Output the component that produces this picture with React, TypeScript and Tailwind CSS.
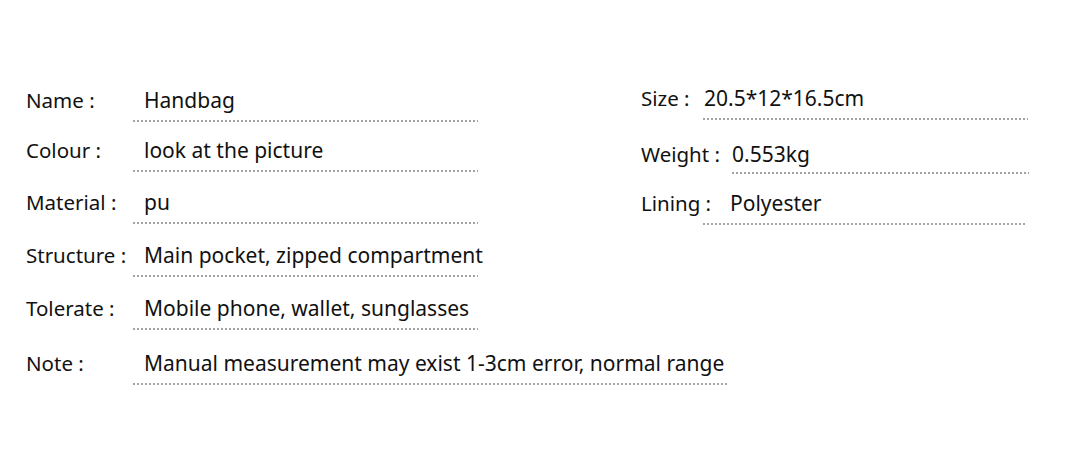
const dots = "h-[2px] bg-[linear-gradient(to_right,#a3a3a3_2px,transparent_2px)] bg-[length:4px_2px] bg-repeat-x";
const labelCls = "shrink-0 h-7 leading-7 text-[20.5px] text-[#111] whitespace-nowrap";
const valueCls = "h-7 leading-7 text-[21px] text-[#111] whitespace-nowrap";

function LeftRow({ label, value, mt, wide }: { label: string; value: string; mt: string; wide?: boolean }) {
    return (
        <div className={`flex ${mt}`}>
            <div className={`w-[107px] ${labelCls}`}>{label}</div>
            <div>
                <div className={`pl-[11px] ${valueCls}`}>{value}</div>
                <div className={`mt-[6px] ${dots} ${wide ? "w-[595px]" : "w-[345px]"}`}></div>
            </div>
        </div>
    );
}

export default function App() {
    return (
        <div className="w-[1080px] h-[466px] bg-white overflow-hidden font-['Noto_Sans',sans-serif]">
            <div className="flex">
                {/* Left column */}
                <div className="w-[615px] shrink-0 ml-[26px] pt-[86px]">
                    <LeftRow label="Name :" value="Handbag" mt="mt-0" />
                    <LeftRow label="Colour :" value="look at the picture" mt="mt-[14px]" />
                    <LeftRow label="Material :" value="pu" mt="mt-[16px]" />
                    <LeftRow label="Structure :" value="Main pocket, zipped compartment" mt="mt-[17px]" />
                    <LeftRow label="Tolerate :" value="Mobile phone, wallet, sunglasses" mt="mt-[17px]" />
                    <LeftRow label="Note :" value="Manual measurement may exist 1-3cm error, normal range" mt="mt-[19px]" wide />
                </div>

                {/* Right column */}
                <div className="pt-[84px]">
                    <div className="flex">
                        <div className={`w-[62px] ${labelCls}`}>Size :</div>
                        <div>
                            <div className={`pl-[1px] ${valueCls}`}>20.5*12*16.5cm</div>
                            <div className={`mt-[6px] w-[325px] ${dots}`}></div>
                        </div>
                    </div>
                    <div className="flex mt-[20px]">
                        <div className={`w-[91px] ${labelCls}`}>Weight :</div>
                        <div>
                            <div className={valueCls}>0.553kg</div>
                            <div className={`mt-[4px] w-[297px] ${dots}`}></div>
                        </div>
                    </div>
                    <div className="flex mt-[15px]">
                        <div className={`w-[62px] ${labelCls}`}>Lining :</div>
                        <div>
                            <div className={`pl-[27px] ${valueCls}`}>Polyester</div>
                            <div className={`mt-[6px] w-[323px] ${dots}`}></div>
                        </div>
                    </div>
                </div>
            </div>
        </div>
    );
}
